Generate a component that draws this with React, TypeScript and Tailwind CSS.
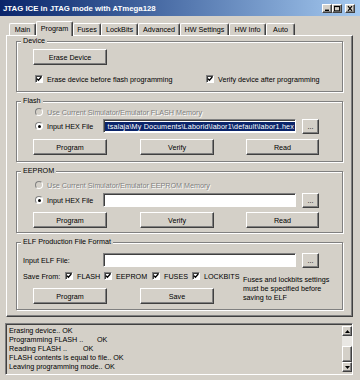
import type { ReactNode } from "react";

const raised =
  "border border-t-white border-l-white border-r-[#404040] border-b-[#404040] shadow-[inset_-1px_-1px_0_#808080]";
const sunken =
  "border border-t-[#808080] border-l-[#808080] border-r-white border-b-white shadow-[inset_1px_1px_0_#404040]";

function Button({ className = "", children }: { className?: string; children?: ReactNode }) {
  return <div className={`flex h-[16px] shrink-0 items-center justify-center ${raised} ${className}`}>{children}</div>;
}

function Browse() {
  return (
    <div className={`ml-[6px] flex h-[15px] w-[17px] shrink-0 items-end justify-center pb-[3px] ${raised}`}>
      <span className="leading-[6px]">...</span>
    </div>
  );
}

function Field({ children }: { children?: ReactNode }) {
  return (
    <div className={`flex h-[14px] w-[193px] shrink-0 items-center overflow-hidden bg-white pl-[1px] ${sunken}`}>
      {children}
    </div>
  );
}

function Check() {
  return (
    <span className="flex h-[8px] w-[8px] shrink-0 items-center justify-center border border-t-[#808080] border-l-[#808080] border-r-white border-b-white bg-white shadow-[inset_1px_1px_0_#404040]">
      <svg viewBox="0 0 6 6" className="h-[6px] w-[6px]">
        <path d="M0.8 2.6 L2.4 4.3 L5.3 1" stroke="#000" strokeWidth="1.3" fill="none" />
      </svg>
    </span>
  );
}

function Radio({ on = false, disabled = false }: { on?: boolean; disabled?: boolean }) {
  return (
    <span
      className={`flex h-[8px] w-[8px] shrink-0 items-center justify-center rounded-full border border-t-[#808080] border-l-[#808080] border-r-white border-b-white ${
        disabled ? "bg-[#d4d0c8]" : "bg-white"
      }`}
    >
      {on && <span className="h-[3px] w-[3px] rounded-full bg-black" />}
    </span>
  );
}

function Group({ title, className = "", children }: { title: string; className?: string; children?: ReactNode }) {
  return (
    <div className={`relative w-[327px] border border-[#808080] shadow-[1px_1px_0_#fff,inset_1px_1px_0_#fff] ${className}`}>
      <span className="absolute left-[4px] top-[-6px] bg-[#d4d0c8] px-[2px] leading-[9px]">{title}</span>
      {children}
    </div>
  );
}

function Tab({ w, sel = false, children }: { w: string; sel?: boolean; children: ReactNode }) {
  return (
    <div
      className={`flex shrink-0 items-center justify-center rounded-t-[2px] border-l border-t border-r border-l-white border-t-white border-r-[#404040] bg-[#d4d0c8] shadow-[inset_-1px_0_0_#808080] ${w} ${
        sel ? "relative z-10 -mb-px h-[15px] pb-[2px]" : "h-[12px]"
      }`}
    >
      {children}
    </div>
  );
}

function TitleButton({ children, className = "" }: { children: ReactNode; className?: string }) {
  return (
    <div className={`flex h-[9px] w-[10px] items-center justify-center bg-[#d4d0c8] ${raised} ${className}`}>
      {children}
    </div>
  );
}

export default function App() {
  return (
    <div className="flex h-[380px] w-[360px] flex-col overflow-hidden bg-[#d4d0c8] font-['Liberation_Sans',Arial,sans-serif] text-[7.2px] leading-[9px] text-black">
      {/* title bar */}
      <div className="flex h-[16px] shrink-0 items-center bg-linear-to-r from-[#0a246a] to-[#a6caf0] pl-[3px] pr-[5px]">
        <span className="flex-1 text-[7.8px] font-bold text-white">JTAG ICE in JTAG mode with ATmega128</span>
        <TitleButton>
          <svg viewBox="0 0 8 7" className="h-[7px] w-[8px]">
            <rect x="2" y="4.6" width="4" height="1.4" fill="#000" />
          </svg>
        </TitleButton>
        <TitleButton>
          <svg viewBox="0 0 8 7" className="h-[7px] w-[8px]">
            <rect x="1.5" y="1.2" width="5" height="4.6" fill="none" stroke="#000" strokeWidth="0.9" />
            <rect x="1.5" y="1" width="5" height="1.1" fill="#000" />
          </svg>
        </TitleButton>
        <TitleButton className="ml-[3px]">
          <svg viewBox="0 0 8 7" className="h-[7px] w-[8px]">
            <path d="M2 1.2 L6 5.8 M6 1.2 L2 5.8" stroke="#000" strokeWidth="1.2" />
          </svg>
        </TitleButton>
      </div>

      {/* tabs */}
      <div className="flex h-[19px] shrink-0 items-end pl-[9px]">
        <Tab w="w-[27px]">Main</Tab>
        <Tab w="w-[37px]" sel>
          Program
        </Tab>
        <Tab w="w-[28px]">Fuses</Tab>
        <Tab w="w-[37px]">LockBits</Tab>
        <Tab w="w-[42px]">Advanced</Tab>
        <Tab w="w-[49px]">HW Settings</Tab>
        <Tab w="w-[37px]">HW Info</Tab>
        <Tab w="w-[29px]">Auto</Tab>
      </div>

      {/* tab panel */}
      <div className={`ml-[6px] h-[282px] w-[347px] shrink-0 pl-[9px] pt-[5px] ${raised}`}>
        <Group title="Device" className="h-[51px] pl-[16px] pt-[7px]">
          <Button className="w-[74px]">Erase Device</Button>
          <div className="mt-[9px] flex h-[10px] items-center">
            <div className="flex w-[173px] items-center pl-[2px]">
              <Check />
              <span className="ml-[4px]">Erase device before flash programming</span>
            </div>
            <Check />
            <span className="ml-[4px]">Verify device after programming</span>
          </div>
        </Group>

        <Group title="Flash" className="mt-[9px] h-[61px] pl-[16px] pt-[5px]">
          <div className="flex h-[10px] items-center pl-[2px]">
            <Radio disabled />
            <span className="ml-[4px] text-[#808080] [text-shadow:1px_1px_0_#fff]">
              Use Current Simulator/Emulator FLASH Memory
            </span>
          </div>
          <div className="mt-[2px] flex h-[14px] items-center">
            <div className="flex w-[70px] items-center pl-[2px]">
              <Radio on />
              <span className="ml-[4px]">Input HEX File</span>
            </div>
            <Field>
              <div className="flex w-[190px] justify-end overflow-hidden bg-[#0a246a]">
                <span className="shrink-0 whitespace-nowrap pr-[1px] tracking-[0.16px] text-white">
                  tsalaja\My Documents\Laborid\labor1\default\labor1.hex
                </span>
              </div>
            </Field>
            <Browse />
          </div>
          <div className="mt-[6px] flex">
            <Button className="w-[74px]">Program</Button>
            <Button className="ml-[33px] w-[74px]">Verify</Button>
            <Button className="ml-[32px] w-[73px]">Read</Button>
          </div>
        </Group>

        <Group title="EEPROM" className="mt-[9px] h-[62px] pl-[16px] pt-[8px]">
          <div className="flex h-[10px] items-center pl-[2px]">
            <Radio disabled />
            <span className="ml-[4px] text-[#808080] [text-shadow:1px_1px_0_#fff]">
              Use Current Simulator/Emulator EEPROM Memory
            </span>
          </div>
          <div className="mt-[3px] flex h-[14px] items-center">
            <div className="flex w-[70px] items-center pl-[2px]">
              <Radio on />
              <span className="ml-[4px]">Input HEX File</span>
            </div>
            <Field />
            <Browse />
          </div>
          <div className="mt-[5px] flex">
            <Button className="w-[74px]">Program</Button>
            <Button className="ml-[33px] w-[74px]">Verify</Button>
            <Button className="ml-[32px] w-[73px]">Read</Button>
          </div>
        </Group>

        <Group title="ELF Production File Format" className="mt-[9px] h-[68px] pl-[6px] pt-[10px]">
          <div className="flex h-[14px] items-center">
            <span className="w-[80px] shrink-0">Input ELF File:</span>
            <Field />
            <Browse />
          </div>
          <div className="flex">
            <div className="w-[220px] shrink-0">
              <div className="mt-[4px] flex h-[10px] items-center">
                <span className="w-[42px] shrink-0">Save From:</span>
                <div className="flex w-[39px] shrink-0 items-center">
                  <Check />
                  <span className="ml-[4px]">FLASH</span>
                </div>
                <div className="flex w-[48px] shrink-0 items-center">
                  <Check />
                  <span className="ml-[4px]">EEPROM</span>
                </div>
                <div className="flex w-[40px] shrink-0 items-center">
                  <Check />
                  <span className="ml-[4px]">FUSES</span>
                </div>
                <div className="flex shrink-0 items-center">
                  <Check />
                  <span className="ml-[4px]">LOCKBITS</span>
                </div>
              </div>
              <div className="ml-[10px] mt-[7px] flex">
                <Button className="w-[74px]">Program</Button>
                <Button className="ml-[33px] w-[74px]">Save</Button>
              </div>
            </div>
            <div className="mt-[8px]">
              Fuses and lockbits settings
              <br />
              must be specified before
              <br />
              saving to ELF
            </div>
          </div>
        </Group>
      </div>

      {/* log */}
      <div className={`ml-[5px] mt-[6px] flex h-[52px] w-[348px] shrink-0 ${sunken}`}>
        <div className="flex-1 whitespace-pre pl-[3px] pt-[2px]">
          <div>Erasing device.. OK</div>
          <div>
            <span className="inline-block w-[88px]">Programming FLASH ..</span>OK
          </div>
          <div>
            <span className="inline-block w-[74px]">Reading FLASH ..</span>OK
          </div>
          <div>FLASH contents is equal to file.. OK</div>
          <div>Leaving programming mode.. OK</div>
        </div>
        <div className="flex w-[10px] shrink-0 flex-col pt-[2px]">
          <div className={`flex h-[10px] items-center justify-center ${raised}`}>
            <svg viewBox="0 0 5 3" className="h-[3px] w-[5px]">
              <path d="M0 3 L2.5 0 L5 3 Z" fill="#000" />
            </svg>
          </div>
          <div className="h-[10px] bg-[#e9e7e3]" />
          <div className={`h-[16px] ${raised}`} />
          <div className={`flex h-[10px] items-center justify-center ${raised}`}>
            <svg viewBox="0 0 5 3" className="h-[3px] w-[5px]">
              <path d="M0 0 L5 0 L2.5 3 Z" fill="#000" />
            </svg>
          </div>
        </div>
      </div>
    </div>
  );
}
